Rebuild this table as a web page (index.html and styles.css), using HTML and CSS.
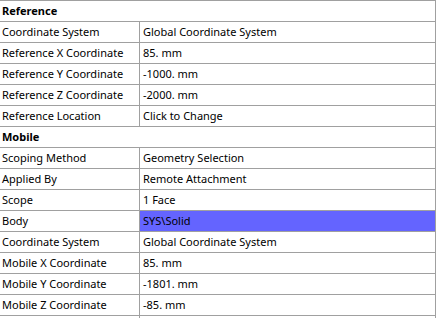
FILE: index.html
```html
<!DOCTYPE html>
<html lang="en">
<head>
  <meta charset="UTF-8">
  <title>Details</title>
  <link rel="stylesheet" href="styles.css">
</head>
<body>
  <div class="details">
    <div class="group">Reference</div>
    <div class="row"><div class="label">Coordinate System</div><div class="value">Global Coordinate System</div></div>
    <div class="row"><div class="label">Reference X Coordinate</div><div class="value">85. mm</div></div>
    <div class="row"><div class="label">Reference Y Coordinate</div><div class="value">-1000. mm</div></div>
    <div class="row"><div class="label">Reference Z Coordinate</div><div class="value">-2000. mm</div></div>
    <div class="row"><div class="label">Reference Location</div><div class="value">Click to Change</div></div>
    <div class="group">Mobile</div>
    <div class="row"><div class="label">Scoping Method</div><div class="value">Geometry Selection</div></div>
    <div class="row"><div class="label">Applied By</div><div class="value">Remote Attachment</div></div>
    <div class="row"><div class="label">Scope</div><div class="value">1 Face</div></div>
    <div class="row"><div class="label">Body</div><div class="value selected">SYS\Solid</div></div>
    <div class="row"><div class="label">Coordinate System</div><div class="value">Global Coordinate System</div></div>
    <div class="row"><div class="label">Mobile X Coordinate</div><div class="value">85. mm</div></div>
    <div class="row"><div class="label">Mobile Y Coordinate</div><div class="value">-1801. mm</div></div>
    <div class="row"><div class="label">Mobile Z Coordinate</div><div class="value">-85. mm</div></div>
    <div class="row"><div class="label"></div><div class="value"></div></div>
  </div>
</body>
</html>
```

FILE: styles.css
```css
body {
  margin: 0;
  background: #ffffff;
  font-family: "Noto Sans", "Open Sans", sans-serif;
  font-size: 11px;
  color: #000;
}

.details {
  width: 436px;
  border-top: 1px solid #a0a0a0;
  border-right: 1px solid #a0a0a0;
  box-sizing: border-box;
}

.group,
.row {
  height: 21px;
  line-height: 20px;
  border-bottom: 1px solid #a0a0a0;
  box-sizing: border-box;
}

.group {
  font-weight: bold;
  padding-left: 2px;
}

.row {
  display: flex;
}

.label {
  width: 140px;
  flex: none;
  padding-left: 2px;
  border-right: 1px solid #a0a0a0;
  box-sizing: border-box;
  white-space: nowrap;
  overflow: hidden;
}

.value {
  flex: 1;
  padding-left: 3px;
  white-space: nowrap;
}

.selected {
  background: #6464ff;
}
```
